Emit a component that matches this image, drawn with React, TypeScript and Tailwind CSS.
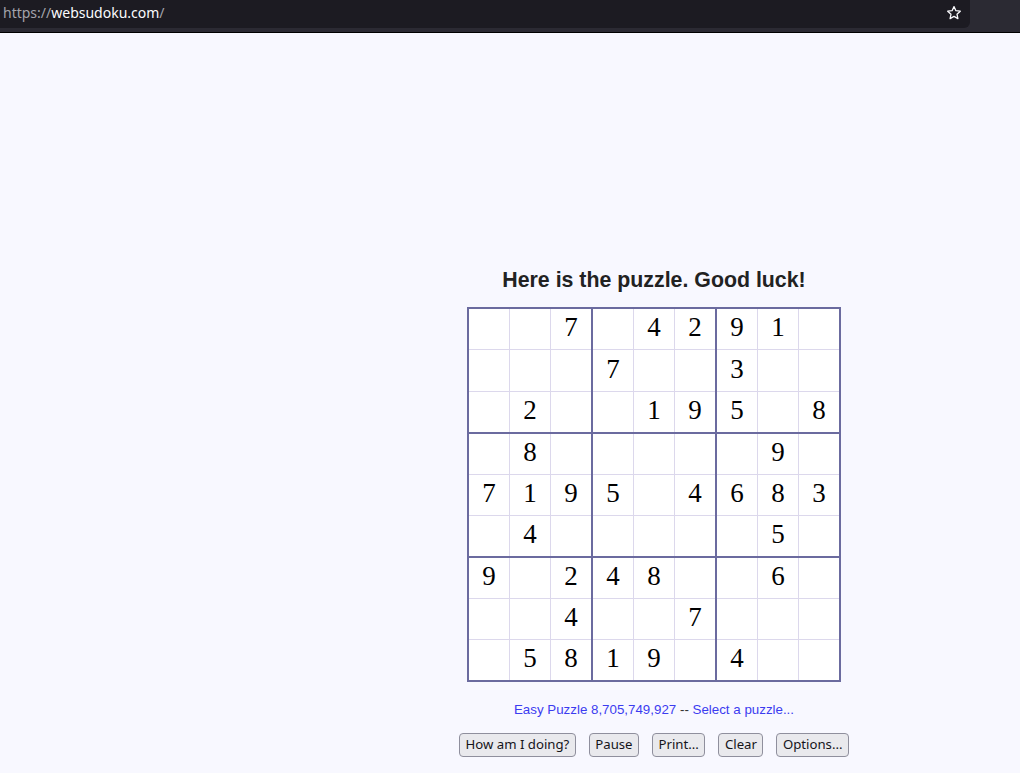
const puzzle: string[] = [
  "  7 4291 ",
  "   7  3  ",
  " 2  195 8",
  " 8     9 ",
  "7195 4683",
  " 4     5 ",
  "9 248  6 ",
  "  4  7   ",
  " 5819 4  ",
];

const buttons = ["How am I doing?", "Pause", "Print...", "Clear", "Options..."];

function Box({ br, bc }: { br: number; bc: number }) {
  const cells = [];
  for (let r = 0; r < 3; r++) {
    for (let c = 0; c < 3; c++) {
      const ch = puzzle[br * 3 + r][bc * 3 + c];
      const tall = br === 0 && r === 1;
      cells.push(
        <div
          key={`${r}-${c}`}
          className={
            (tall ? "h-[41px] " : "h-[40px] ") +
            "w-[40px] bg-white flex items-center justify-center pb-[3px] text-[27px] text-black font-['Liberation_Serif',serif]"
          }
        >
          {ch.trim()}
        </div>
      );
    }
  }
  return <div className="grid grid-cols-3 gap-px bg-[#dcd8ec]">{cells}</div>;
}

function BrowserBar() {
  return (
    <div className="h-[33px] bg-[#2b2a33] border-b border-black">
      <div className="h-[28px] w-[970px] bg-[#1c1b22] rounded-br-[6px] flex items-center justify-between pl-[3px] pr-[8px]">
        <div className="text-[14px] font-['Noto_Sans',sans-serif] leading-none pb-[2px]">
          <span className="text-[#a3a3ab]">https://</span>
          <span className="text-[#fbfbfe]">websudoku.com</span>
          <span className="text-[#a3a3ab]">/</span>
        </div>
        <svg width="16" height="16" viewBox="0 0 16 16" className="mb-[2px]">
          <path
            d="M8 1.6l1.9 4.1 4.4.5-3.3 3 .9 4.4L8 11.4l-3.9 2.2.9-4.4-3.3-3 4.4-.5z"
            fill="none"
            stroke="#fbfbfe"
            strokeWidth="1.3"
            strokeLinejoin="round"
          />
        </svg>
      </div>
    </div>
  );
}

export default function App() {
  return (
    <div className="w-[1020px] h-[773px] bg-[#f8f8ff] overflow-hidden">
      <BrowserBar />
      <div className="pl-[454px] pt-[235px]">
        <div className="w-[400px] flex flex-col items-center">
          <h1 className="text-[21.33px] leading-[24px] font-bold text-[#222222] font-['Liberation_Sans',Arial,sans-serif]">
            Here is the puzzle. Good luck!
          </h1>
          <div className="mt-[15px] grid grid-cols-3 gap-[2px] p-[2px] bg-[#6b6b9f]">
            {[0, 1, 2].map((br) =>
              [0, 1, 2].map((bc) => <Box key={`${br}${bc}`} br={br} bc={bc} />)
            )}
          </div>
          <div className="mt-[20px] text-[13.33px] leading-[16px] font-['Liberation_Sans',Arial,sans-serif]">
            <span className="text-[#3c3cf0]">Easy Puzzle 8,705,749,927</span>
            <span className="text-[#333333]"> -- </span>
            <span className="text-[#3c3cf0]">Select a puzzle...</span>
          </div>
          <div className="mt-[15px] flex gap-[13px]">
            {buttons.map((b) => (
              <button
                key={b}
                className="h-[24px] px-[5.5px] bg-[#e9e9ed] border border-[#8f8f9d] rounded-[4px] text-[13.2px] text-[#15141a] font-['Noto_Sans',sans-serif] leading-none"
              >
                {b}
              </button>
            ))}
          </div>
        </div>
      </div>
    </div>
  );
}
